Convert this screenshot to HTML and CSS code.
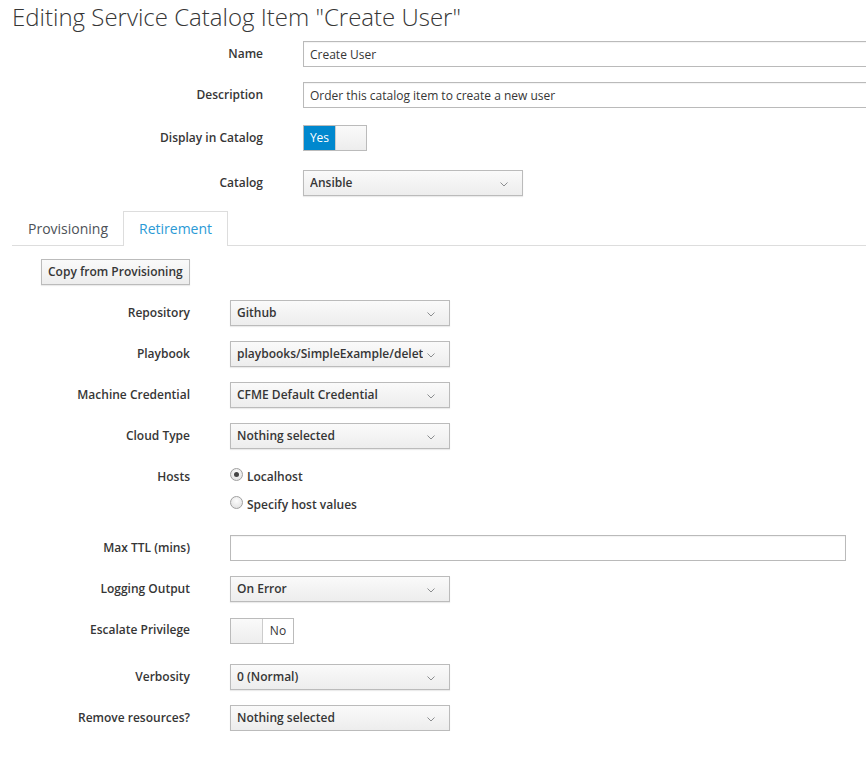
FILE: index.html
```html
<!DOCTYPE html>
<html>
<head>
<meta charset="utf-8">
<link rel="stylesheet" href="styles.css">
</head>
<body>
<h1 class="title">Editing Service Catalog Item "Create User"</h1>

<div class="form-top">
  <div class="row r-name">
    <label class="lbl">Name</label>
    <input class="text wide" type="text" value="Create User">
  </div>
  <div class="row r-desc">
    <label class="lbl">Description</label>
    <input class="text wide" type="text" value="Order this catalog item to create a new user">
  </div>
  <div class="row r-disp">
    <label class="lbl">Display in Catalog</label>
    <div class="toggle on"><span class="tg-label tg-yes">Yes</span><span class="tg-handle"></span></div>
  </div>
  <div class="row r-cat">
    <label class="lbl">Catalog</label>
    <div class="select"><span class="sel-text">Ansible</span><svg class="caret" width="8" height="5" viewBox="0 0 8 5"><polyline points="0.5,0.5 4,4 7.5,0.5" fill="none" stroke="#8b8d8f" stroke-width="1"/></svg></div>
  </div>
</div>

<ul class="tabs">
  <li class="tab">Provisioning</li>
  <li class="tab active">Retirement</li>
</ul>

<div class="pane">
  <button class="btn-copy">Copy from Provisioning</button>

  <div class="form-bottom">
    <div class="row2 first">
      <label class="lbl">Repository</label>
      <div class="select"><span class="sel-text">Github</span><svg class="caret" width="8" height="5" viewBox="0 0 8 5"><polyline points="0.5,0.5 4,4 7.5,0.5" fill="none" stroke="#8b8d8f" stroke-width="1"/></svg></div>
    </div>
    <div class="row2">
      <label class="lbl">Playbook</label>
      <div class="select"><span class="sel-text">playbooks/SimpleExample/delete_user.yml</span><svg class="caret" width="8" height="5" viewBox="0 0 8 5"><polyline points="0.5,0.5 4,4 7.5,0.5" fill="none" stroke="#8b8d8f" stroke-width="1"/></svg></div>
    </div>
    <div class="row2">
      <label class="lbl">Machine Credential</label>
      <div class="select"><span class="sel-text">CFME Default Credential</span><svg class="caret" width="8" height="5" viewBox="0 0 8 5"><polyline points="0.5,0.5 4,4 7.5,0.5" fill="none" stroke="#8b8d8f" stroke-width="1"/></svg></div>
    </div>
    <div class="row2">
      <label class="lbl">Cloud Type</label>
      <div class="select"><span class="sel-text">Nothing selected</span><svg class="caret" width="8" height="5" viewBox="0 0 8 5"><polyline points="0.5,0.5 4,4 7.5,0.5" fill="none" stroke="#8b8d8f" stroke-width="1"/></svg></div>
    </div>
    <div class="row2 hosts">
      <label class="lbl lbl-top">Hosts</label>
      <div class="radios">
        <div class="radio"><span class="rd checked"></span><span class="rd-text">Localhost</span></div>
        <div class="radio second"><span class="rd"></span><span class="rd-text">Specify host values</span></div>
      </div>
    </div>
    <div class="row2 ttl">
      <label class="lbl">Max TTL (mins)</label>
      <input class="text ttl-input" type="text" value="">
    </div>
    <div class="row2">
      <label class="lbl">Logging Output</label>
      <div class="select"><span class="sel-text">On Error</span><svg class="caret" width="8" height="5" viewBox="0 0 8 5"><polyline points="0.5,0.5 4,4 7.5,0.5" fill="none" stroke="#8b8d8f" stroke-width="1"/></svg></div>
    </div>
    <div class="row2 esc">
      <label class="lbl lbl-esc">Escalate Privilege</label>
      <div class="toggle off"><span class="tg-handle"></span><span class="tg-label tg-no">No</span></div>
    </div>
    <div class="row2 verb">
      <label class="lbl">Verbosity</label>
      <div class="select"><span class="sel-text">0 (Normal)</span><svg class="caret" width="8" height="5" viewBox="0 0 8 5"><polyline points="0.5,0.5 4,4 7.5,0.5" fill="none" stroke="#8b8d8f" stroke-width="1"/></svg></div>
    </div>
    <div class="row2">
      <label class="lbl">Remove resources?</label>
      <div class="select"><span class="sel-text">Nothing selected</span><svg class="caret" width="8" height="5" viewBox="0 0 8 5"><polyline points="0.5,0.5 4,4 7.5,0.5" fill="none" stroke="#8b8d8f" stroke-width="1"/></svg></div>
    </div>
  </div>
</div>
</body>
</html>
```

FILE: styles.css
```css
html, body {
  margin: 0;
  padding: 0;
  overflow: hidden;
  background: #fff;
}
body {
  font-family: "Open Sans", "Liberation Sans", sans-serif;
  font-size: 12px;
  color: #363636;
  width: 866px;
}
.title {
  margin: 4px 0 0 12px;
  font-size: 24px;
  font-weight: 300;
  line-height: 26px;
  color: #363636;
  white-space: nowrap;
}
.form-top {
  margin-top: 11px;
}
.row {
  display: grid;
  grid-template-columns: 263px 1fr;
  column-gap: 40px;
  align-items: center;
}
.r-desc { margin-top: 15px; }
.r-disp { margin-top: 17px; }
.r-cat { margin-top: 19px; }

.lbl {
  text-align: right;
  font-weight: 600;
  font-size: 12px;
  line-height: 16px;
  color: #363636;
  white-space: nowrap;
}
.text {
  box-sizing: border-box;
  height: 26px;
  border: 1px solid #bababa;
  padding: 2px 6px;
  font-family: "Open Sans", "Liberation Sans", sans-serif;
  font-size: 12px;
  color: #363636;
  background: #fff;
  box-shadow: inset 0 1px 1px rgba(3,3,3,0.05);
  outline: none;
  margin: 0;
}
.wide { width: 580px; }

.toggle {
  box-sizing: border-box;
  width: 64px;
  height: 26px;
  border: 1px solid #bbb;
  display: flex;
  overflow: hidden;
}
.tg-label {
  width: 31px;
  display: flex;
  align-items: center;
  justify-content: center;
  font-size: 12px;
  line-height: 16px;
  padding-bottom: 1px;
}
.tg-yes {
  background: #0088ce;
  color: #fff;
}
.tg-no {
  background: #fff;
  color: #363636;
  width: 30px;
}
.tg-handle {
  flex: 1;
  background: linear-gradient(#fafafa, #ededed);
}
.toggle.on .tg-handle { border-left: 1px solid #ccc; }
.toggle.off .tg-handle { border-right: 1px solid #ccc; }

.select {
  box-sizing: border-box;
  width: 220px;
  height: 26px;
  border: 1px solid #bbb;
  background: linear-gradient(#fafafa, #ededed);
  box-shadow: 0 1px 1px rgba(3,3,3,0.08);
  display: flex;
  align-items: center;
  padding: 0 14px 1px 6px;
  font-weight: 600;
  font-size: 12px;
  line-height: 16px;
  color: #363636;
}
.sel-text {
  flex: 1;
  overflow: hidden;
  white-space: nowrap;
  text-overflow: clip;
}
.caret {
  flex: none;
  margin-left: 4px;
  margin-top: 3px;
}

.tabs {
  list-style: none;
  margin: 15px 0 0 12px;
  padding: 0;
  display: flex;
  border-bottom: 1px solid #ddd;
}
.tab {
  padding: 7px 15px 6px;
  line-height: 20px;
  font-size: 14px;
  color: #4d5258;
  border: 1px solid transparent;
  border-bottom: none;
  margin-right: -1px;
  margin-bottom: -1px;
}
.tab.active {
  color: #2b9ad6;
  border-color: #ddd;
  background: #fff;
  padding-bottom: 7px;
}

.pane {
  padding-top: 13px;
}
.btn-copy {
  margin-left: 41px;
  box-sizing: border-box;
  height: 26px;
  padding: 0 6px 1px;
  border: 1px solid #bbb;
  background: linear-gradient(#fafafa, #ededed);
  box-shadow: 0 1px 1px rgba(3,3,3,0.08);
  font-family: "Open Sans", "Liberation Sans", sans-serif;
  font-weight: 600;
  font-size: 12px;
  color: #363636;
  display: block;
}
.form-bottom {
  margin-top: 15px;
}
.row2 {
  display: grid;
  grid-template-columns: 190px 1fr;
  column-gap: 40px;
  align-items: center;
  margin-top: 15px;
}
.row2.first { margin-top: 0; }
.row2.hosts {
  margin-top: 18px;
  align-items: start;
}
.lbl-top { line-height: 18px; margin-top: 1px; }
.radios {
  display: flex;
  flex-direction: column;
}
.radio {
  display: flex;
  align-items: center;
  height: 18px;
  font-weight: 600;
}
.radio.second { margin-top: 10px; }
.rd {
  box-sizing: border-box;
  width: 13px;
  height: 13px;
  border-radius: 50%;
  border: 1px solid #a0a0a0;
  background: radial-gradient(circle at 50% 35%, #fdfdfd, #dcdcdc);
  margin-right: 4px;
  position: relative;
  top: -2px;
}
.rd.checked::after {
  content: "";
  position: absolute;
  left: 3px;
  top: 3px;
  width: 5px;
  height: 5px;
  border-radius: 50%;
  background: #444;
}
.row2.ttl { margin-top: 22px; }
.ttl-input { width: 616px; }
.row2.esc { margin-top: 16px; }
.lbl-esc { position: relative; top: -1px; }
.row2.verb { margin-top: 20px; }
```
